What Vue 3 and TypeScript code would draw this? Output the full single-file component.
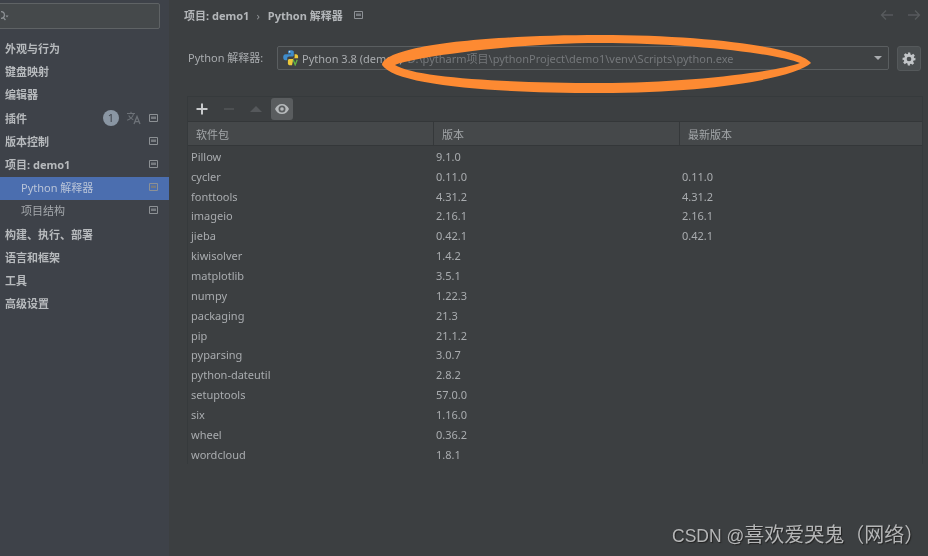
<script setup lang="ts">
interface NavItem { label: string; sub?: boolean; active?: boolean; pin?: boolean; extra?: boolean }
const nav: NavItem[] = [
  { label: '外观与行为' },
  { label: '键盘映射' },
  { label: '编辑器' },
  { label: '插件', pin: true, extra: true },
  { label: '版本控制', pin: true },
  { label: '项目: demo1', pin: true },
  { label: 'Python 解释器', sub: true, active: true, pin: true },
  { label: '项目结构', sub: true, pin: true },
  { label: '构建、执行、部署' },
  { label: '语言和框架' },
  { label: '工具' },
  { label: '高级设置' },
]
const packages: [string, string, string][] = [
  ['Pillow', '9.1.0', ''],
  ['cycler', '0.11.0', '0.11.0'],
  ['fonttools', '4.31.2', '4.31.2'],
  ['imageio', '2.16.1', '2.16.1'],
  ['jieba', '0.42.1', '0.42.1'],
  ['kiwisolver', '1.4.2', ''],
  ['matplotlib', '3.5.1', ''],
  ['numpy', '1.22.3', ''],
  ['packaging', '21.3', ''],
  ['pip', '21.1.2', ''],
  ['pyparsing', '3.0.7', ''],
  ['python-dateutil', '2.8.2', ''],
  ['setuptools', '57.0.0', ''],
  ['six', '1.16.0', ''],
  ['wheel', '0.36.2', ''],
  ['wordcloud', '1.8.1', ''],
]
</script>

<template>
  <div class="page">
    <aside class="side">
      <div class="search">
        <svg class="search-icon" width="14" height="12" viewBox="0 0 14 12" fill="none">
          <circle cx="0" cy="5" r="3.4" stroke="#8f9397" stroke-width="1.2" />
          <path d="M2.400 7.600 4.400 10" stroke="#8f9397" stroke-width="1.2" />
          <path d="M4.500 5.500h3l-1.500 2z" fill="#8f9397" />
        </svg>
      </div>
      <nav class="nav">
        <div v-for="item in nav" :key="item.label" class="nav-row" :class="{ sub: item.sub, active: item.active }">
          <span class="nav-label">{{ item.label }}</span>
          <template v-if="item.extra">
            <span class="badge">1</span>
            <svg class="translate" width="15" height="14" viewBox="0 0 15 14" fill="none" stroke="#6d7278" stroke-width="1.1">
              <path d="M1 2.500h8M5 .8v1.700M7.600 2.500C7 5.500 4.500 8 1.200 9.200M2.700 4.500c1 2 2.600 3.400 4.600 4.300" />
              <path d="M8 13l3-7.500L14 13M9 10.600h4" stroke-width="1.3" />
            </svg>
          </template>
          <svg v-if="item.pin" class="pin" width="9" height="8" viewBox="0 0 9 8">
            <path d="M.5.5h8v7h-8z" fill="none" stroke="#8d9195" />
            <path d="M2 2.500h5v2.500H2z" fill="#777b80" />
          </svg>
        </div>
      </nav>
    </aside>

    <main class="main">
      <header class="crumbs">
        <span class="crumb">项目: demo1</span>
        <span class="sep">›</span>
        <span class="crumb">Python 解释器</span>
        <svg class="crumb-pin" width="9" height="8" viewBox="0 0 9 8">
          <path d="M.5.5h8v7h-8z" fill="none" stroke="#8d9195" />
          <path d="M2 2.500h5v2.500H2z" fill="#777b80" />
        </svg>
        <span class="spacer"></span>
        <svg class="arrow" width="14" height="12" viewBox="0 0 14 12" fill="none" stroke="#575a5d" stroke-width="1.3">
          <path d="M13 6H1.500M6 1.500 1.500 6 6 10.500" />
        </svg>
        <svg class="arrow" width="14" height="12" viewBox="0 0 14 12" fill="none" stroke="#575a5d" stroke-width="1.3">
          <path d="M1 6h11.500M8 1.500 12.500 6 8 10.500" />
        </svg>
      </header>

      <section class="interp">
        <span class="interp-label">Python 解释器:</span>
        <div class="select">
          <svg class="py" width="16" height="16" viewBox="0 0 16 16">
            <path d="M5 1.500C5 .6 6 .2 7.800.2c1.800 0 3 .5 3 1.500v3.200c0 1-.8 1.700-1.800 1.700H6.200C5 6.600 4.200 7.400 4.200 8.500v1.800H2.400C1 10.300.2 9.200.2 7.300c0-1.900.9-3 2.300-3H8v-.7H5z" fill="#3f8ccb" />
            <path d="M11.600 4.300h1.500c1.300 0 2 1 2 2.800v1.200H10.500L9 15.200H7.500c-1.800 0-2.600-.6-2.600-1.500v-3c0-1 .7-1.700 1.700-1.700h3c1.200 0 2-.8 2-2z" fill="#edc93a" />
            <circle cx="6.600" cy="1.800" r=".7" fill="#dfe6ee" />
            <path d="M10.200 9.800l2 5 2-5" fill="none" stroke="#62b543" stroke-width="1.300" />
          </svg>
          <span class="py-name">Python 3.8 (demo1)</span>
          <span class="py-path">D:\pytharm项目\pythonProject\demo1\venv\Scripts\python.exe</span>
          <span class="caret"></span>
        </div>
        <button class="gear" type="button" aria-label="设置">
          <svg width="14" height="14" viewBox="0 0 24 24" fill="#c2c5c8">
            <path fill-rule="evenodd" d="M10 1h4l.6 3.200 1.900.8 2.700-1.800 2.800 2.800-1.800 2.700.8 1.900L23 10v4l-3.200.6-.8 1.900 1.800 2.700-2.800 2.800-2.700-1.800-1.900.8L14 23h-4l-.6-3.200-1.900-.8-2.700 1.800-2.800-2.800 1.800-2.700-.8-1.900L1 14v-4l3.200-.6.8-1.900-1.800-2.700 2.800-2.800 2.700 1.800 1.900-.8zM12 8a4 4 0 1 0 0 8 4 4 0 0 0 0-8z" />
          </svg>
        </button>
      </section>

      <section class="panel">
        <div class="toolbar">
          <svg class="tool" width="12" height="12" viewBox="0 0 12 12"><path d="M5 .5h2v4.500h4.500v2H7v4.500H5V7H.5V5H5z" fill="#c8cacc" /></svg>
          <svg class="tool" width="12" height="12" viewBox="0 0 12 12"><path d="M1 5.300h10v1.400H1z" fill="#55585b" /></svg>
          <svg class="tool" width="12" height="12" viewBox="0 0 12 12"><path d="M6 3l6 6H0z" fill="#55585b" /></svg>
          <span class="eye">
            <svg width="14" height="10" viewBox="0 0 14 10">
              <path fill-rule="evenodd" d="M7 0c3.200 0 5.700 2 7 5-1.300 3-3.800 5-7 5S1.300 8 0 5c1.300-3 3.800-5 7-5zm0 1.500a3.500 3.500 0 1 0 0 7 3.500 3.500 0 0 0 0-7z" fill="#b6b9bb" />
              <circle cx="7" cy="5" r="1.800" fill="#b6b9bb" />
            </svg>
          </span>
        </div>
        <div class="thead">
          <div class="th th-name">软件包</div>
          <div class="th">版本</div>
          <div class="th">最新版本</div>
        </div>
        <div class="tbody">
          <div v-for="p in packages" :key="p[0]" class="tr">
            <span class="td td-name">{{ p[0] }}</span>
            <span class="td">{{ p[1] }}</span>
            <span class="td">{{ p[2] }}</span>
          </div>
        </div>
      </section>
    </main>

    <svg class="scribble" width="440" height="76" viewBox="377 26 440 76">
      <path
        fill="#fd8a32"
        fill-rule="evenodd"
        d="M382 65C385 45 490 35 600 35C710 35 800 48 811 63C795 78 710 93 600 93C490 93 395 85 382 65Z
           M395 65C410 58 510 43 600 43C690 43 780 54 800 63C780 71 690 83 600 83C510 83 415 78 395 65Z"
      />
    </svg>
    <div class="mark">CSDN @<span class="mark-cjk">喜欢爱哭鬼（网络）</span></div>
  </div>
</template>

<style>
html, body { margin: 0; background: #3c3f41; }
</style>

<style scoped>
.page {
  position: relative;
  width: 928px;
  height: 556px;
  display: flex;
  overflow: hidden;
  background: #3c3f41;
  font-family: "Noto Sans", "Noto Sans CJK SC", sans-serif;
  filter: blur(0.4px);
}
.side {
  width: 169px;
  flex: none;
  background: #3e4249;
  padding-top: 3px;
  box-sizing: border-box;
}
.search {
  margin-left: -8px;
  width: 168px;
  height: 26px;
  box-sizing: border-box;
  border: 1px solid #5f6365;
  border-radius: 2px;
  background: #45494b;
  display: flex;
  align-items: center;
  padding-left: 8px;
}
.search-icon { flex: none; }
.nav { margin-top: 9px; }
.nav-row {
  height: 23.2px;
  box-sizing: border-box;
  display: flex;
  align-items: center;
  padding: 0 11px 3px 5px;
  font-size: 11px;
  font-weight: 700;
  color: #b7babd;
}
.nav-row.sub {
  padding-left: 21px;
  font-weight: 400;
  color: #a4a8ac;
}
.nav-row.active {
  background: #4b6eaf;
  color: #b9c4d8;
}
.nav-label { flex: 1; white-space: nowrap; }
.badge {
  width: 16px;
  height: 16px;
  border-radius: 50%;
  background: #8a96a3;
  color: #3e4249;
  font-size: 11px;
  font-weight: 400;
  line-height: 16px;
  text-align: center;
  margin-right: 7px;
}
.translate { margin-right: 8px; }
.pin { flex: none; }
.main { flex: 1; min-width: 0; padding-left: 19px; }
.crumbs {
  height: 30px;
  display: flex;
  align-items: center;
  padding-right: 7px;
  margin-left: -4px;
  font-size: 11px;
  font-weight: 700;
  color: #b3b6b9;
}
.crumb { white-space: nowrap; }
.sep { margin: 0 8px 0 7px; font-weight: 400; color: #8f9295; }
.crumb-pin { margin-left: 11px; }
.spacer { flex: 1; }
.arrow { margin-left: 13px; }
.interp {
  display: flex;
  align-items: flex-start;
  height: 25px;
  margin-top: 16px;
  padding-right: 7px;
}
.interp-label {
  width: 89px;
  height: 24px;
  line-height: 24px;
  flex: none;
  font-size: 11px;
  color: #a9acaf;
  white-space: nowrap;
}
.select {
  flex: 1;
  height: 24px;
  box-sizing: border-box;
  border: 1px solid #5a5e60;
  border-radius: 2px;
  background: #3f4244;
  display: flex;
  align-items: center;
  padding: 0 6px 0 5px;
  font-size: 11px;
  white-space: nowrap;
}
.py { flex: none; margin-right: 3px; }
.py-name { color: #a9acaf; }
.py-path { color: #75787b; margin-left: 5px; flex: 1; }
.caret {
  width: 0;
  height: 0;
  border-left: 4px solid transparent;
  border-right: 4px solid transparent;
  border-top: 4px solid #a9acaf;
}
.gear {
  width: 24px;
  height: 25px;
  margin-left: 8px;
  padding: 0;
  box-sizing: border-box;
  border: 1px solid #55595b;
  border-radius: 3px;
  background: #4a4e50;
  display: flex;
  align-items: center;
  justify-content: center;
}
.panel {
  margin: 25px 5px 0 -1px;
  border: 1px solid #363a3c;
  border-bottom: 0;
}
.toolbar {
  height: 24px;
  display: flex;
  align-items: center;
  padding-left: 8px;
  gap: 15px;
  border-bottom: 1px solid #343739;
}
.eye {
  width: 22px;
  height: 22px;
  margin-left: -6px;
  border-radius: 3px;
  background: #5a5d5f;
  display: flex;
  align-items: center;
  justify-content: center;
}
.thead {
  height: 24px;
  display: grid;
  grid-template-columns: 245px 246px 1fr;
  background: #45484a;
  border-bottom: 1px solid #343739;
  box-sizing: border-box;
}
.th {
  display: flex;
  align-items: center;
  padding-left: 8px;
  font-size: 11px;
  color: #a3a6a9;
  border-left: 1px solid #35383a;
}
.th-name { border-left: 0; }
.tbody { padding-top: 0.4px; }
.tr {
  height: 19.87px;
  display: grid;
  grid-template-columns: 245px 246px 1fr;
  align-items: center;
  font-size: 11px;
  color: #a9acaf;
}
.td { padding-left: 3px; white-space: nowrap; }
.scribble { position: absolute; left: 377px; top: 26px; }
.mark {
  position: absolute;
  left: 672px;
  top: 522px;
  font-family: "Liberation Sans", "Noto Sans CJK SC", sans-serif;
  font-size: 17.5px;
  line-height: 26px;
  color: #b5b6b7;
  text-shadow: 1px 1px 1px #222;
  white-space: nowrap;
}
.mark-cjk { font-size: 20px; }
</style>
